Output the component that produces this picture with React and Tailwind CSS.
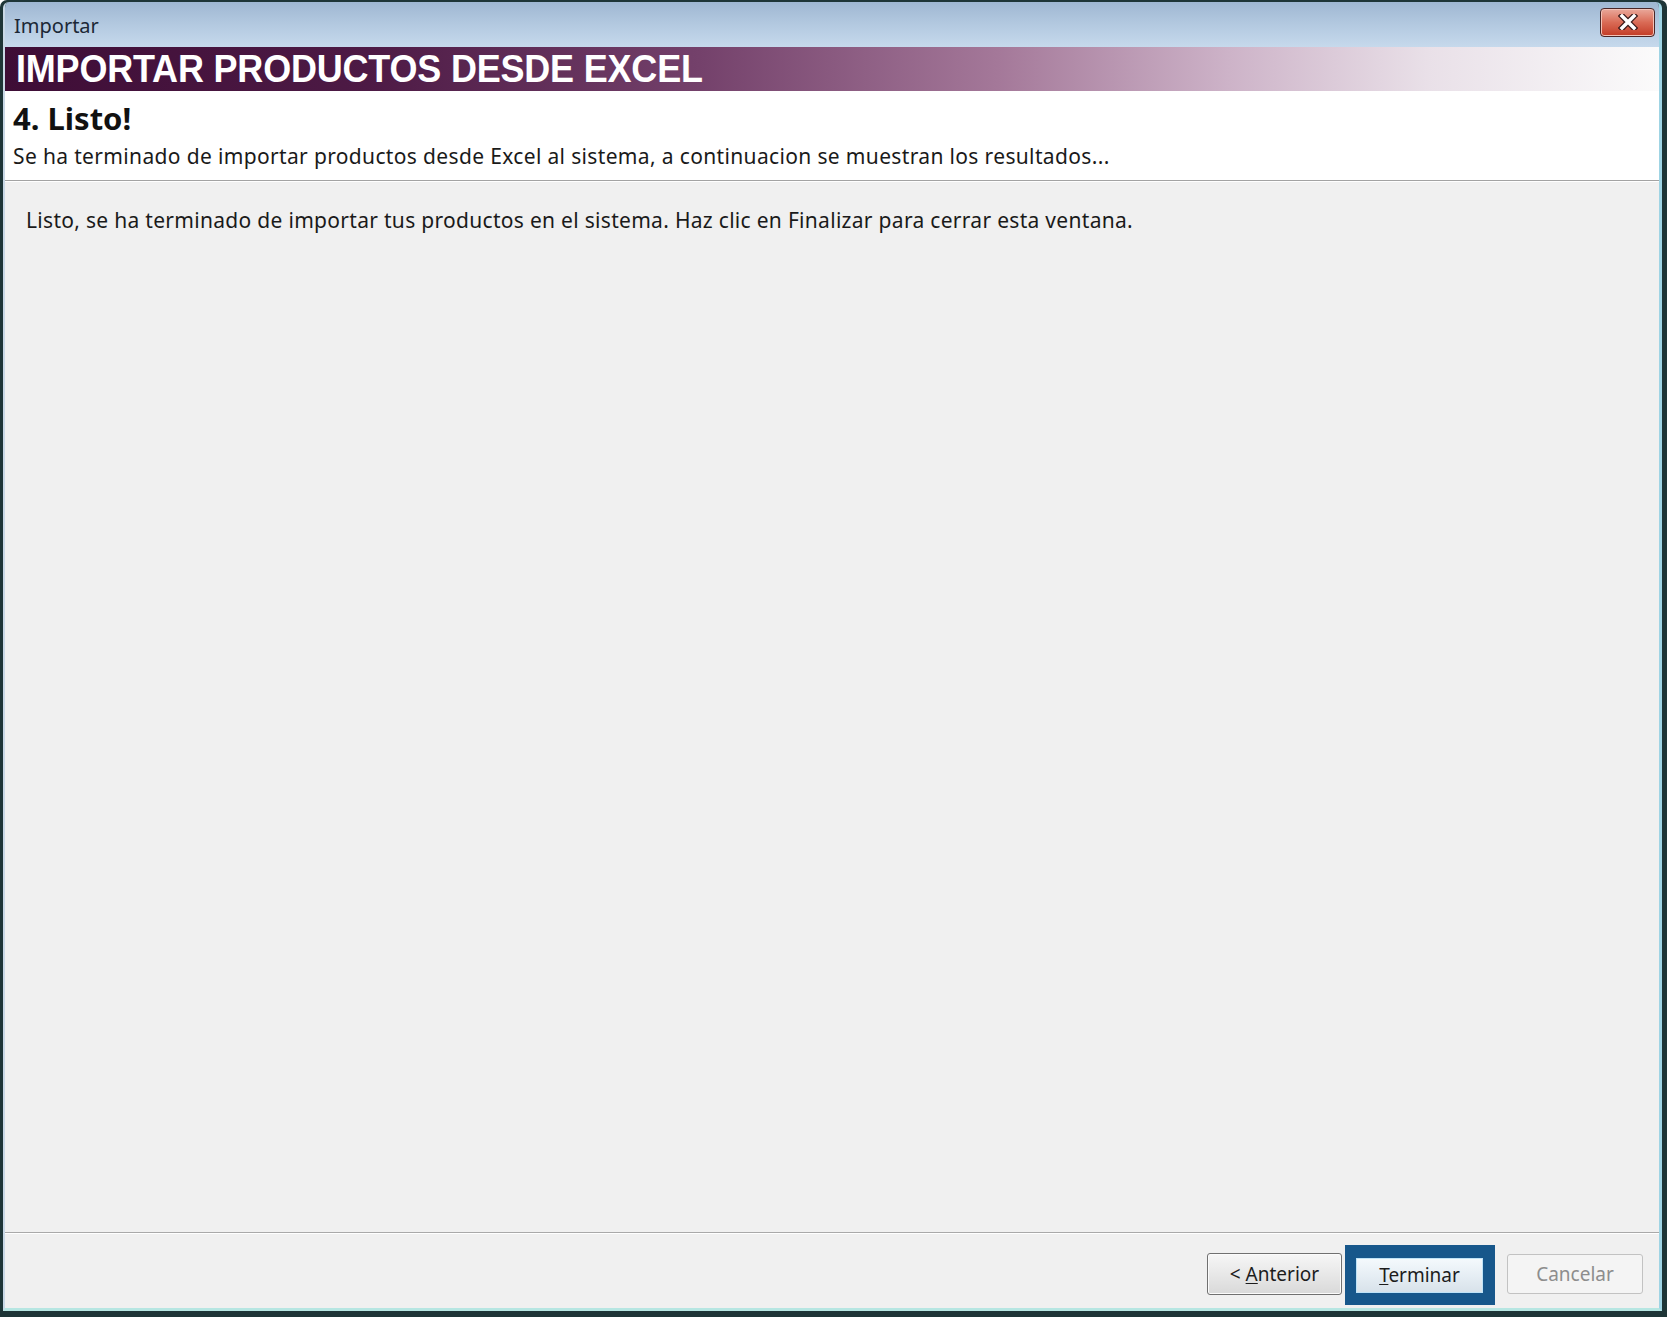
import React from "react";

const font = { fontFamily: '"Noto Sans", "Open Sans", sans-serif' };

const WinButton = ({ children, disabled = false }) => (
  <button
    type="button"
    className={
      disabled
        ? "w-[136px] h-[40px] rounded-[3px] border border-[#c2c2c2] bg-[#f4f4f4] text-[19px] text-[#8d8d8d] flex items-center justify-center"
        : "w-[135px] h-[42px] rounded-[3px] border border-[#707070] bg-gradient-to-b from-[#f6f6f6] via-[#e8e8e8] to-[#d9d9d9] text-[19px] text-[#1c1c1c] flex items-center justify-center shadow-[inset_0_0_0_1px_#fbfbfb]"
    }
  >
    {children}
  </button>
);

export default function App() {
  return (
    <div
      className="w-[1667px] h-[1317px] bg-[#1e3537] rounded-t-[7px] pt-[2px] pl-[3px] pr-[5px] pb-[6px] flex"
      style={font}
    >
      <div className="flex-1 flex flex-col border-l-[2px] border-r-[3px] border-b-[3px] border-l-[#c9d8e6] border-r-[#9fd4e4] border-b-[#b6e6e2] rounded-t-[6px] overflow-hidden">
        {/* title bar */}
        <div className="h-[45px] shrink-0 flex items-center justify-between bg-gradient-to-b from-[#9fb7d2] via-[#b3c9e0] to-[#c6d9ec] pl-[9px] pr-[4px]">
          <span className="text-[20px] text-[#1c2836] leading-none mt-[2px]">Importar</span>
          <div className="w-[55px] h-[29px] -mt-[5px] rounded-[4px] border border-[#4a2626] bg-gradient-to-b from-[#e9a89b] via-[#d96a55] to-[#c23a24] flex items-center justify-center shadow-[inset_0_0_0_1px_#f3c2b6]">
            <svg width="20" height="16" viewBox="0 0 20 16">
              <path d="M4 2 L16 14 M16 2 L4 14" stroke="#3a1a1a" strokeWidth="6" strokeLinecap="square" />
              <path d="M4 2 L16 14 M16 2 L4 14" stroke="#ffffff" strokeWidth="3.5" strokeLinecap="square" />
            </svg>
          </div>
        </div>

        {/* banner */}
        <div className="h-[44px] shrink-0 flex items-center pl-[11px] bg-[linear-gradient(to_right,#3e0d36_0%,#4d1a45_22%,#74416b_42%,#a47899_60%,#cdb3c8_74%,#e9e0e8_86%,#fbfbfb_100%)]">
          <span
            className="text-[36px] font-bold text-white leading-none tracking-[-0.2px] scale-y-110"
            style={{ fontFamily: '"Liberation Sans", Arial, sans-serif' }}
          >
            IMPORTAR PRODUCTOS DESDE EXCEL
          </span>
        </div>

        {/* header */}
        <div className="h-[90px] shrink-0 bg-white pl-[8px] flex flex-col border-b border-b-[#a3a3a3]">
          <div className="text-[31px] font-bold text-[#111] leading-none mt-[12px]">4. Listo!</div>
          <div className="text-[21px] text-[#1a1a1a] leading-none mt-[12px] tracking-[0.35px]">
            Se ha terminado de importar productos desde Excel al sistema, a continuacion se muestran los resultados...
          </div>
        </div>

        {/* body */}
        <div className="flex-1 bg-[#f0f0f0] border-t border-t-white flex flex-col">
          <div className="flex-1 pl-[21px] pt-[28px]">
            <p className="text-[21px] text-[#1a1a1a] leading-none tracking-[0.3px]">
              Listo, se ha terminado de importar tus productos en el sistema. Haz clic en Finalizar para cerrar esta ventana.
            </p>
          </div>
          <div className="h-[76px] shrink-0 border-t border-t-[#a9a9a9] flex items-start justify-end pr-[16px] shadow-[inset_0_1px_0_#ffffff]">
            <div className="mt-[20px]">
              <WinButton>
                &lt;&nbsp;<u className="underline-offset-2">A</u>nterior
              </WinButton>
            </div>
            <div className="mt-[12px] ml-[3px] w-[150px] h-[60px] bg-[#17578b] pl-[11px] pr-[12px] pt-[13px] pb-[12px]">
              <button
                type="button"
                className="w-full h-full border border-[#bfe3f7] bg-gradient-to-b from-[#f4f9fc] via-[#e6eef4] to-[#d8e2ea] text-[19px] text-[#1c1c1c] flex items-center justify-center"
              >
                <span>
                  <u className="underline-offset-2">T</u>erminar
                </span>
              </button>
            </div>
            <div className="mt-[21px] ml-[12px]">
              <WinButton disabled>Cancelar</WinButton>
            </div>
          </div>
        </div>
      </div>
    </div>
  );
}
